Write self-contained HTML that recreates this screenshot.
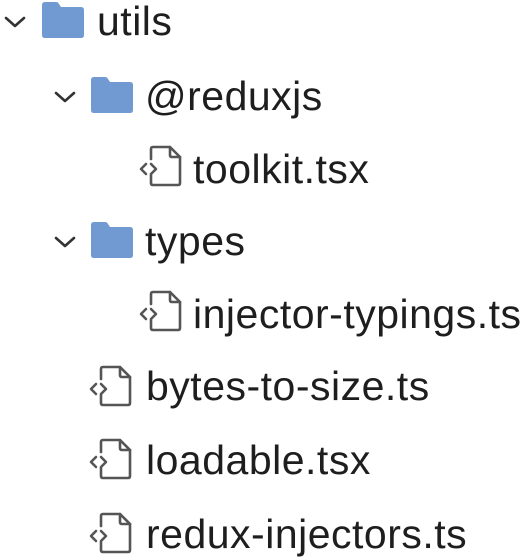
<!DOCTYPE html>
<html><head><style>
body{margin:0;width:532px;height:559px;background:#fff;overflow:hidden;font-family:"Liberation Sans",sans-serif;color:#1e1e1e}
.r{position:absolute;height:40px;display:flex;align-items:center;font-size:41px;letter-spacing:0.5px;white-space:nowrap}
svg{position:absolute}
</style></head><body>
<svg width="0" height="0"><defs>
<symbol id="chev" viewBox="0 0 22 12"><path d="M2 2 L11 10 L20 2" fill="none" stroke="#333" stroke-width="2.6" stroke-linecap="round" stroke-linejoin="round"/></symbol>
<symbol id="fold" viewBox="0 0 42 36"><path d="M3 0 H14 Q16 0 17 2 L19 5 H39 Q42 5 42 8 V33 Q42 36 39 36 H3 Q0 36 0 33 V3 Q0 0 3 0Z" fill="#7199d2"/></symbol>
<symbol id="file" viewBox="0 0 44 42"><g fill="none" stroke="#555" stroke-width="2.6" stroke-linejoin="round" stroke-linecap="round"><path d="M12 14 V4 Q12 2 14 2 H31 L41 12 V38 Q41 40 39 40 H14 Q12 40 12 38 V30"/><path d="M31 2 V10 Q31 12 33 12 H41"/><path d="M7 19 L2 24 L7 29"/><path d="M12 19 L17 24 L12 29"/></g></symbol>
</defs></svg>

<svg style="left:4px;top:16px" width="22" height="12"><use href="#chev"/></svg>
<svg style="left:42px;top:2px" width="42" height="36"><use href="#fold"/></svg>
<div class="r" style="left:97px;top:1px">utils</div>

<svg style="left:54px;top:91px" width="22" height="12"><use href="#chev"/></svg>
<svg style="left:91px;top:77px" width="42" height="36"><use href="#fold"/></svg>
<div class="r" style="left:145px;top:76px">@reduxjs</div>

<svg style="left:139px;top:145px" width="44" height="42"><use href="#file"/></svg>
<div class="r" style="left:193px;top:149px">toolkit.tsx</div>

<svg style="left:54px;top:236px" width="22" height="12"><use href="#chev"/></svg>
<svg style="left:91px;top:222px" width="42" height="36"><use href="#fold"/></svg>
<div class="r" style="left:145px;top:221px">types</div>

<svg style="left:139px;top:290px" width="44" height="42"><use href="#file"/></svg>
<div class="r" style="left:193px;top:294px">injector-typings.ts</div>

<svg style="left:89px;top:365px" width="44" height="42"><use href="#file"/></svg>
<div class="r" style="left:146px;top:366px">bytes-to-size.ts</div>

<svg style="left:89px;top:438px" width="44" height="42"><use href="#file"/></svg>
<div class="r" style="left:146px;top:440px">loadable.tsx</div>

<svg style="left:89px;top:512px" width="44" height="42"><use href="#file"/></svg>
<div class="r" style="left:146px;top:514px">redux-injectors.ts</div>
</body></html>
